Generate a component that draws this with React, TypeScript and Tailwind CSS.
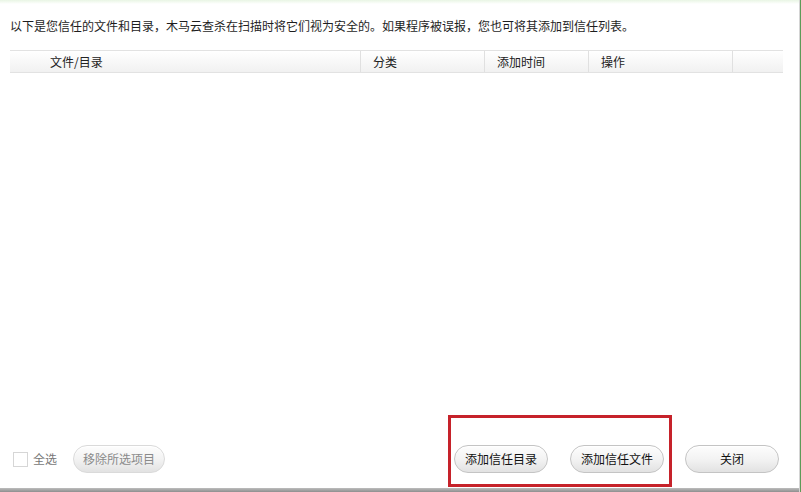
import { useState } from 'react';

type Column = { title: string; width: string; pad: string };

const columns: Column[] = [
  { title: '文件/目录', width: 'w-[351px]', pad: 'pl-[40px]' },
  { title: '分类', width: 'w-[124px]', pad: 'pl-[12px]' },
  { title: '添加时间', width: 'w-[104px]', pad: 'pl-[12px]' },
  { title: '操作', width: 'w-[144px]', pad: 'pl-[12px]' },
  { title: '', width: 'w-[50px]', pad: '' },
];

function PillButton({ label, disabled = false }: { label: string; disabled?: boolean }) {
  return (
    <button
      type="button"
      disabled={disabled}
      className={`h-[28px] rounded-full border text-[12px] leading-none bg-linear-to-b from-[#fdfdfd] via-[#f3f3f3] to-[#e2e2e2] shadow-[inset_0_1px_0_#ffffff] ${
        disabled ? 'w-[92px] border-[#dadada] text-[#8a8a8a]' : 'w-[94px] border-[#c4c4c4] text-[#111]'
      }`}
    >
      {label}
    </button>
  );
}

export default function App() {
  const [selectAll, setSelectAll] = useState(false);

  return (
    <div className="flex w-[801px] h-[492px] bg-white font-['Noto_Sans_CJK_SC','Noto_Sans',sans-serif] text-[12px] overflow-hidden">
      <div className="flex flex-col flex-1">
        {/* faint green edge left by the parent window */}
        <div className="h-[4px] bg-linear-to-b from-[#e9f5e4] to-white" />

        <p className="mt-[14px] pl-[10px] leading-[16px] text-[#1e1e1e] whitespace-nowrap">
          以下是您信任的文件和目录，木马云查杀在扫描时将它们视为安全的。如果程序被误报，您也可将其添加到信任列表。
        </p>

        {/* list header */}
        <div className="mt-[16px] ml-[10px] w-[773px] h-[23px] flex border-y border-[#e2e2e2] bg-linear-to-b from-white to-[#f1f1f1]">
          {columns.map((c, i) => (
            <div
              key={i}
              className={`${c.width} ${c.pad} h-full flex items-center text-[#222] ${
                i < columns.length - 1 ? 'border-r border-[#e0e0e0]' : ''
              }`}
            >
              {c.title}
            </div>
          ))}
        </div>

        <div className="flex-1" />

        {/* footer actions */}
        <div className="flex items-center h-[28px] pl-[13px] pr-[20px]">
          <label className="flex items-center gap-[5px] text-[#777]">
            <input
              type="checkbox"
              checked={selectAll}
              onChange={(e) => setSelectAll(e.target.checked)}
              className="appearance-none w-[15px] h-[15px] border border-[#d6d6d6] bg-white"
            />
            全选
          </label>
          <div className="ml-[16px]">
            <PillButton label="移除所选项目" disabled />
          </div>

          <div className="relative ml-auto flex gap-[22px]">
            <PillButton label="添加信任目录" />
            <PillButton label="添加信任文件" />
            <div className="pointer-events-none absolute -left-[6px] -top-[30px] -bottom-[14px] w-[224px] border-[3px] border-[#c6222a]" />
          </div>
          <div className="ml-[21px]">
            <PillButton label="关闭" />
          </div>
        </div>

        <div className="h-[15px]" />
        <div className="h-[4px] bg-linear-to-b from-[#bdbdbd] to-[#8e8e8e]" />
      </div>

      {/* window frame on the right */}
      <div className="w-[1px] bg-[#d4d4d4]" />
      <div className="w-[1px] bg-[#5c9a58]" />
    </div>
  );
}
